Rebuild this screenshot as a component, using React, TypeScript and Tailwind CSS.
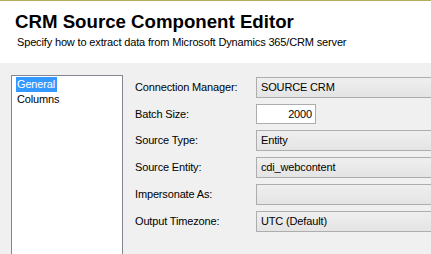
import React from "react";

const fieldCls =
  "h-[21px] w-[200px] border border-[#adadad] bg-gradient-to-b from-[#efefef] to-[#e4e4e4] pl-[4px] flex items-center text-[11px] leading-[13px] tracking-[-0.15px] whitespace-nowrap";

function Row({ label, children }: { label: string; children: React.ReactNode }) {
  return (
    <>
      <div className="flex items-center text-[11px] leading-[13px] tracking-[-0.15px] whitespace-nowrap">{label}</div>
      <div className="flex items-center">{children}</div>
    </>
  );
}

export default function App() {
  return (
    <div className="w-[431px] h-[254px] overflow-hidden bg-[#f0f0f0] text-black font-['Liberation_Sans',Arial,sans-serif]">
      <div className="h-px bg-[#b3ae5a]" />
      <div className="h-[62px] bg-white pl-[15px] pt-[10px]">
        <div className="text-[18.67px] font-bold leading-[22px] whitespace-nowrap">CRM Source Component Editor</div>
        <div className="mt-[3px] pl-[2px] text-[11px] leading-[13px] tracking-[-0.15px] whitespace-nowrap">
          Specify how to extract data from Microsoft Dynamics 365/CRM server
        </div>
      </div>
      <div className="flex items-start pt-[12px]">
        <div className="ml-[11px] w-[112px] h-[200px] shrink-0 border border-[#828790] bg-white pt-[1px] pl-[4px] text-[11px] leading-[15px] tracking-[-0.15px]">
          <div className="w-[41px] h-[15px] bg-[#3399ff] text-white pl-[1px]">General</div>
          <div className="h-[15px] pl-[1px]">Columns</div>
        </div>
        <div className="mt-[2px] pl-[12px] grid grid-cols-[121px_200px] gap-y-[6px] overflow-hidden">
          <Row label="Connection Manager:">
            <div className={fieldCls}>SOURCE CRM</div>
          </Row>
          <Row label="Batch Size:">
            <div className="h-[20px] w-[60px] border border-[#adadad] bg-white pr-[3px] flex items-center justify-end text-[11px] leading-[13px] tracking-[-0.15px]">
              2000
            </div>
          </Row>
          <Row label="Source Type:">
            <div className={fieldCls}>Entity</div>
          </Row>
          <Row label="Source Entity:">
            <div className={fieldCls}>cdi_webcontent</div>
          </Row>
          <Row label="Impersonate As:">
            <div className={fieldCls}></div>
          </Row>
          <Row label="Output Timezone:">
            <div className={fieldCls}>UTC (Default)</div>
          </Row>
        </div>
      </div>
    </div>
  );
}
